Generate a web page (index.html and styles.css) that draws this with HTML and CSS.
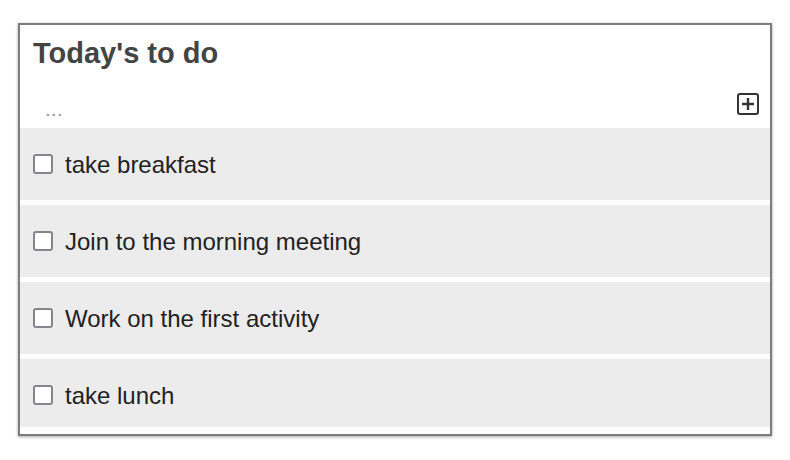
FILE: index.html
```html
<!DOCTYPE html>
<html>
<head>
<meta charset="utf-8">
<link rel="stylesheet" href="styles.css">
</head>
<body>
<div class="card">
  <h1 class="title">Today's to do</h1>
  <div class="add-row">
    <span class="placeholder">...</span>
    <svg class="add-icon" width="22" height="22" viewBox="0 0 22 22">
      <rect x="1" y="1" width="20" height="20" rx="2" fill="none" stroke="#333" stroke-width="2"/>
      <path d="M11 5v12M5 11h12" stroke="#333" stroke-width="2.4" fill="none"/>
    </svg>
  </div>
  <div class="list">
    <div class="item"><span class="check"></span><span class="label">take breakfast</span></div>
    <div class="item"><span class="check"></span><span class="label">Join to the morning meeting</span></div>
    <div class="item"><span class="check"></span><span class="label">Work on the first activity</span></div>
    <div class="item"><span class="check"></span><span class="label">take lunch</span></div>
  </div>
</div>
</body>
</html>
```

FILE: styles.css
```css
html, body {
  margin: 0;
  padding: 0;
  background: #fff;
}
body {
  padding: 23px 18px;
  font-family: "Liberation Sans", Arial, sans-serif;
}
.card {
  width: 750px;
  border: 2px solid #7c7c7c;
  box-shadow: 0 1px 3px rgba(0, 0, 0, 0.35);
  background: #fff;
  padding-bottom: 7px;
}
.title {
  margin: 0;
  padding: 12px 0 0 13px;
  font-size: 29px;
  line-height: 33px;
  font-weight: bold;
  color: #444;
}
.add-row {
  display: flex;
  align-items: center;
  justify-content: space-between;
  height: 48px;
  margin-top: 10px;
  padding: 0 11px 0 25px;
}
.placeholder {
  font-size: 21px;
  color: #999;
  padding-top: 10px;
}
.add-icon {
  display: block;
}
.list {
  height: 299px;
  overflow: hidden;
}
.item {
  display: flex;
  align-items: center;
  height: 72px;
  margin-bottom: 5px;
  background: #ececec;
  padding-left: 13px;
}
.check {
  width: 16px;
  height: 16px;
  border: 2px solid #86858d;
  border-radius: 3px;
  background: #fff;
  margin-right: 12px;
  flex: none;
}
.label {
  font-size: 24px;
  color: #222;
  padding-top: 2px;
}
```
